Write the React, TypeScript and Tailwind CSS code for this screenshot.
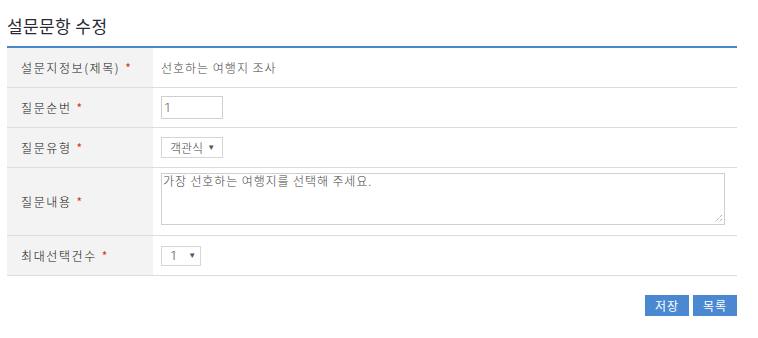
import React from "react";

const font = { fontFamily: '"Noto Sans CJK KR", "Noto Sans", sans-serif' };
const digit = { fontFamily: 'Roboto, "Liberation Sans", sans-serif' };
const arrow = { fontFamily: '"Liberation Sans", "DejaVu Sans", sans-serif' };

function Req() {
  return <span className="ml-[5px] text-[12px] font-normal text-[#e0301e]">*</span>;
}

function Row({ label, h, children }: { label: string; h: string; children: React.ReactNode }) {
  return (
    <div className={`flex border-b border-[#dcdcdc] ${h}`}>
      <div className="w-[146px] bg-[#f3f3f3] pl-[14px] flex items-center text-[12px] font-light tracking-[1.6px] text-[#111]">
        {label}
        <Req />
      </div>
      <div className="flex-1 pl-[8px] flex items-center text-[12px] font-light text-[#444]">{children}</div>
    </div>
  );
}

export default function App() {
  return (
    <div className="w-[758px] h-[338px] bg-white" style={font}>
      <div className="ml-[7px] w-[730px]">
        <div className="h-[46px] pt-[12px] leading-[28px] text-[17px] tracking-[0.4px] text-[#2a2a36]">설문문항 수정</div>
        <div className="border-t-2 border-[#4a86c8]">
          <Row label="설문지정보(제목)" h="h-[40px]">
            <span className="tracking-[1px]">선호하는 여행지 조사</span>
          </Row>
          <Row label="질문순번" h="h-[40px]">
            <div className="w-[62px] h-[23px] border border-[#cfcfcf] flex items-center pl-[2px] text-[13px] font-light text-[#555]" style={digit}>1</div>
          </Row>
          <Row label="질문유형" h="h-[40px]">
            <div className="w-[62px] h-[21px] border border-[#d6d6d6] flex items-center pl-[8px] text-[12px] text-[#444]">
              객관식
              <span className="ml-[4px] text-[8px] font-normal text-[#555]" style={arrow}>▼</span>
            </div>
          </Row>
          <Row label="질문내용" h="h-[68px]">
            <div className="relative w-[564px] h-[52px] border border-[#cfcfcf] self-start mt-[5px] pl-[1px] leading-[14px] text-[12px] text-[#444] tracking-[0.9px]">
              가장 선호하는 여행지를 선택해 주세요.
              <svg className="absolute right-[1px] bottom-[1px]" width="9" height="9" viewBox="0 0 9 9">
                <path d="M8 1L1 8M8 5L5 8" stroke="#888" strokeWidth="1" strokeDasharray="1 1" />
              </svg>
            </div>
          </Row>
          <Row label="최대선택건수" h="h-[40px]">
            <div className="w-[40px] h-[20px] border border-[#d6d6d6] flex items-center pl-[8px] text-[13px] text-[#444]">
              <span className="font-light" style={digit}>1</span>
              <span className="ml-[11px] text-[8px] font-normal text-[#555]" style={arrow}>▼</span>
            </div>
          </Row>
        </div>
        <div className="flex justify-end gap-[4px] mt-[19px]">
          <button className="w-[44px] h-[21px] bg-[#4a89d2] text-white text-[12px] tracking-[1px] leading-[21px]">저장</button>
          <button className="w-[44px] h-[21px] bg-[#4a89d2] text-white text-[12px] tracking-[1px] leading-[21px]">목록</button>
        </div>
      </div>
    </div>
  );
}
